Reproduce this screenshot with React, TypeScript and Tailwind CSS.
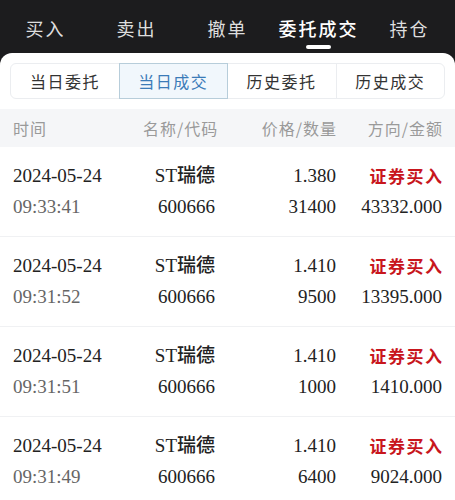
const TABS = ["买入", "卖出", "撤单", "委托成交", "持仓"];
const SEGMENTS = ["当日委托", "当日成交", "历史委托", "历史成交"];

const TRADES = [
  { date: "2024-05-24", time: "09:33:41", name: "ST瑞德", code: "600666", price: "1.380", qty: "31400", side: "证券买入", amount: "43332.000" },
  { date: "2024-05-24", time: "09:31:52", name: "ST瑞德", code: "600666", price: "1.410", qty: "9500", side: "证券买入", amount: "13395.000" },
  { date: "2024-05-24", time: "09:31:51", name: "ST瑞德", code: "600666", price: "1.410", qty: "1000", side: "证券买入", amount: "1410.000" },
  { date: "2024-05-24", time: "09:31:49", name: "ST瑞德", code: "600666", price: "1.410", qty: "6400", side: "证券买入", amount: "9024.000" },
];

const FONT = "font-['Liberation_Serif','Noto_Sans_CJK_SC',serif]";
const COLS = "grid grid-cols-[130px_72px_121px_1fr] px-[13px] whitespace-nowrap";

export default function App() {
  return (
    <div className={`w-[455px] h-[500px] overflow-hidden bg-[#1c1c1e] ${FONT}`}>
      {/* Top tabs */}
      <div className="grid grid-cols-5 h-[53px]">
        {TABS.map((t, i) => {
          const active = i === 3;
          return (
            <div key={t} className="flex flex-col items-center pt-[14px]">
              <span
                className={
                  "text-[18px] leading-[28px] tracking-[2px] font-['Noto_Sans_CJK_SC',sans-serif] " +
                  (active ? "text-white font-medium" : "text-[#dedede]")
                }
              >
                {t}
              </span>
              {active && <div className="mt-[3px] h-[4px] w-[25px] rounded-full bg-white" />}
            </div>
          );
        })}
      </div>

      {/* Card */}
      <div className="bg-white rounded-t-[12px] h-[447px] pt-[10px]">
        {/* Segmented control */}
        <div className="mx-[10px] grid grid-cols-4 h-[36px] rounded-[6px] border border-[#ebedf0] font-['Noto_Sans_CJK_SC',sans-serif]">
          {SEGMENTS.map((s, i) => {
            const active = i === 1;
            return (
              <div
                key={s}
                className={
                  "flex items-center justify-center text-[16px] tracking-[1.5px] " +
                  (active
                    ? "bg-[#f1f7fc] border border-[#b7cdda] text-[#3b7bb8] -my-px"
                    : "text-[#333] " + (i === 3 ? "border-l border-[#ebedf0]" : ""))
                }
              >
                {s}
              </div>
            );
          })}
        </div>

        {/* Header */}
        <div className={`${COLS} mt-[10px] h-[38px] items-center bg-[#f5f6f8] text-[16px] tracking-[1px] text-[#9a9a9a] font-['Noto_Sans_CJK_SC',sans-serif]`}>
          <span>时间</span>
          <span className="text-right -mr-[1px]">名称/代码</span>
          <span className="text-right -mr-[1px]">价格/数量</span>
          <span className="text-right -mr-[1px]">方向/金额</span>
        </div>

        {/* Rows */}
        {TRADES.map((r, i) => (
          <div key={i} className="border-b border-[#f0f1f3] pt-[15px] pb-[15px]">
            <div className={`${COLS} text-[19px] leading-[28px]`}>
              <span className="text-[#222]">{r.date}</span>
              <span className="text-right text-[#222] font-medium">{r.name}</span>
              <span className="text-right text-[#222]">{r.price}</span>
              <span className="text-right text-[#c8161d] font-bold text-[17px] tracking-[1.5px] -mr-[1.5px] font-['Noto_Sans_CJK_SC',sans-serif]">
                {r.side}
              </span>
            </div>
            <div className={`${COLS} mt-[3px] text-[19px] leading-[28px]`}>
              <span className="text-[#666]">{r.time}</span>
              <span className="text-right text-[#222]">{r.code}</span>
              <span className="text-right text-[#222]">{r.qty}</span>
              <span className="text-right text-[#222]">{r.amount}</span>
            </div>
          </div>
        ))}
      </div>
    </div>
  );
}
